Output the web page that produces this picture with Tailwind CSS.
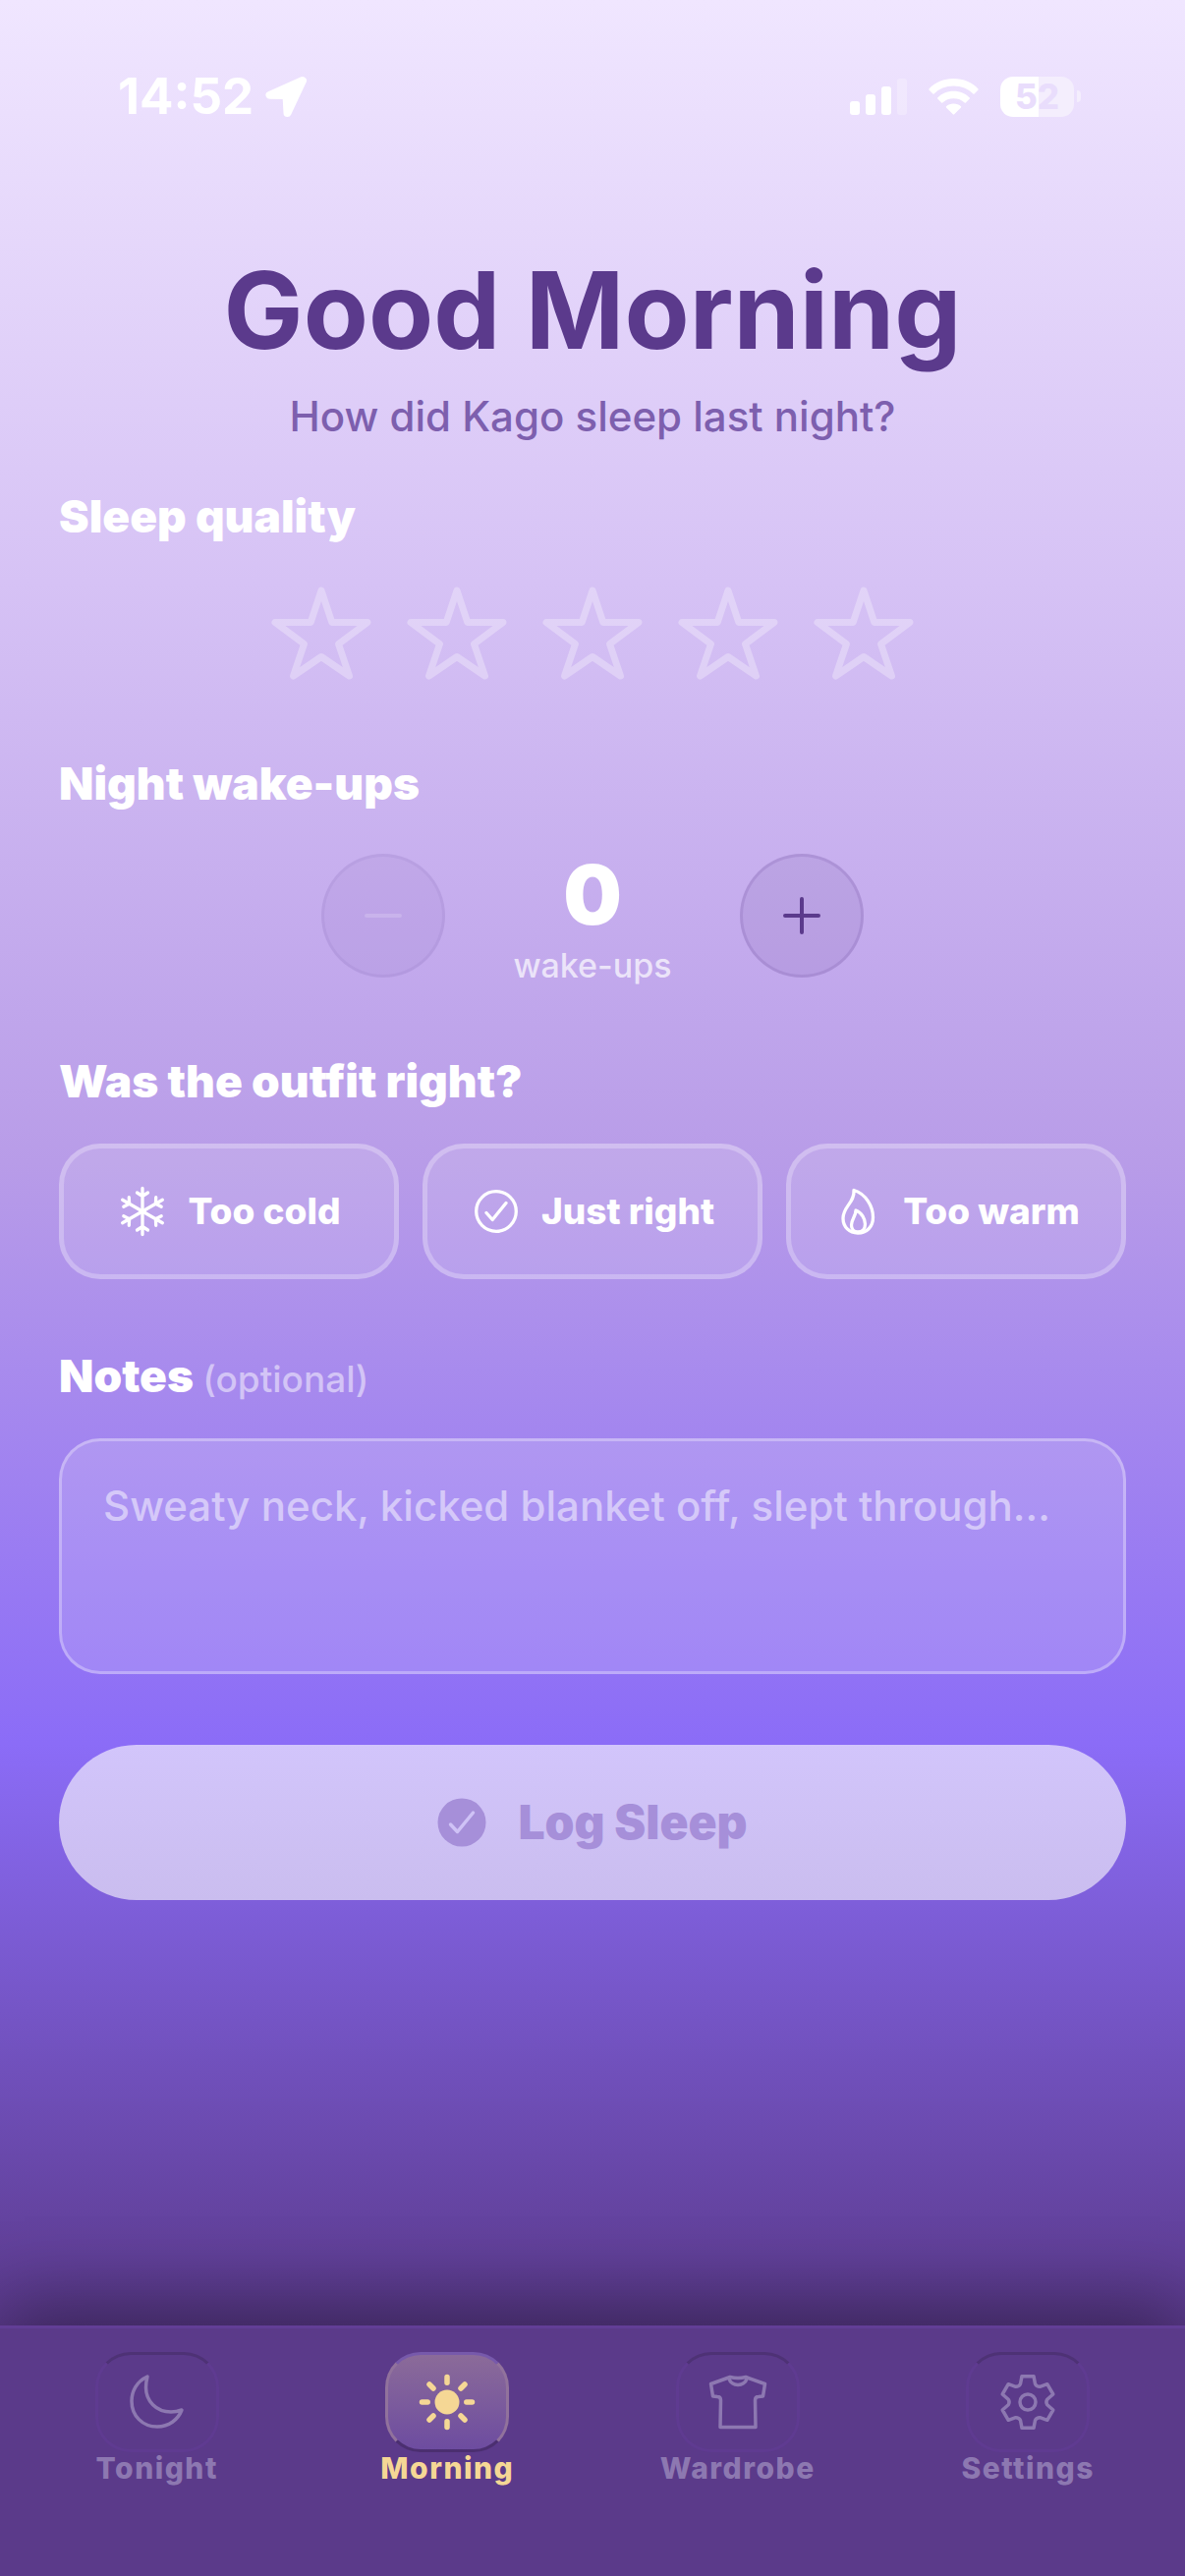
<!DOCTYPE html>
<html lang="en">
<head>
    <meta charset="UTF-8">
    <meta name="viewport" content="width=device-width, initial-scale=1.0">
    <title>Good Morning</title>
    <script src="https://cdn.jsdelivr.net/npm/@tailwindcss/browser@4"></script>
</head>
<body class="min-h-screen flex flex-col bg-[#5b3a8a] font-['Inter',sans-serif] text-white">

    <!-- Screen -->
    <div class="flex-1 bg-[linear-gradient(180deg,#f0e6ff_0%,#d6c2f5_25%,#b89ce8_50%,#8b6cf7_75%,#5b3a8c_100%)]">

        <!-- Status bar -->
        <header class="h-[196px] pl-[120px] pr-[106px] flex items-center justify-between">
            <div class="flex items-center gap-3">
                <span class="text-[51px] leading-[60px] font-bold">14:52</span>
                <svg class="size-11" viewBox="0 0 44 44" fill="#fff" stroke="#fff" stroke-width="8" stroke-linejoin="round"><path d="M38 6 L4.500 20.800 L21.500 21 L22.500 39 Z"/></svg>
            </div>
            <div class="flex items-center gap-[22px]">
                <svg class="w-[58px] h-[38px]" viewBox="0 0 58 38" fill="#fff">
                    <rect x="0" y="24" width="10" height="14" rx="3"/>
                    <rect x="16" y="17" width="10" height="21" rx="3"/>
                    <rect x="32" y="9" width="10" height="29" rx="3"/>
                    <rect x="48" y="1" width="10" height="37" rx="3" opacity=".25"/>
                </svg>
                <svg class="w-[51px] h-[38px]" viewBox="0 0 51 38" fill="#fff">
                    <path d="M25.500 1 C35.500 1 44.500 5 50.500 11.400 Q51 12 50.500 12.600 L46.600 16.500 Q46 17 45.400 16.500 C40.200 11.500 33.500 8.600 25.500 8.600 C17.500 8.600 10.800 11.500 5.600 16.500 Q5 17 4.400 16.500 L.5 12.600 Q0 12 .5 11.400 C6.500 5 15.500 1 25.500 1 Z"/>
                    <path d="M25.500 13.800 C32 13.800 37.600 16.300 41.800 20.400 Q42.300 21 41.800 21.500 L37.900 25.400 Q37.300 25.900 36.700 25.400 C33.700 22.700 30 21.200 25.500 21.200 C21 21.200 17.300 22.700 14.300 25.400 Q13.700 25.900 13.100 25.400 L9.200 21.500 Q8.700 21 9.200 20.400 C13.400 16.300 19 13.800 25.500 13.800 Z"/>
                    <path d="M25.500 26.600 C28.500 26.600 31 27.700 33 29.300 Q33.500 29.900 33 30.400 L26.200 37.300 Q25.500 38 24.800 37.300 L18 30.400 Q17.500 29.900 18 29.300 C20 27.700 22.500 26.600 25.500 26.600 Z"/>
                </svg>
                <div class="flex items-center gap-[3px]">
                    <div class="w-[75px] h-[41px] rounded-[13px] bg-[linear-gradient(90deg,#fff_52%,#f4eefd_52%)] flex items-center justify-center text-[35px] leading-[41px] font-extrabold text-[#e9ddfc]">52</div>
                    <div class="w-1 h-3 rounded-r-full bg-[#f4eefd]"></div>
                </div>
            </div>
        </header>

        <main class="px-[60px] pt-[60px]">
            <h1 class="text-center text-[108px] leading-[120px] font-bold text-[#5b3a8c]">Good Morning</h1>
            <p class="mt-[18px] text-center text-[42px] leading-[60px] font-medium text-[#7d5fae]">How did Kago sleep last night?</p>

            <!-- Sleep quality -->
            <h2 class="mt-[41px] text-[46px] leading-[60px] font-black">Sleep quality</h2>
            <svg class="hidden">
                <symbol id="star" viewBox="-57 -57 114 114">
                    <path d="M0 -43 L10.800 -10.500 H47 L17.500 11.500 L28.500 44 L0 24.500 L-28.500 44 L-17.500 11.500 L-47 -10.500 H-10.800 Z" fill="none" stroke="currentColor" stroke-width="7" stroke-linejoin="round"/>
                </symbol>
            </svg>
            <div class="mt-8 flex justify-center gap-6 text-white/30">
                <button type="button" aria-label="1 star"><svg class="size-[114px]"><use href="#star"/></svg></button>
                <button type="button" aria-label="2 stars"><svg class="size-[114px]"><use href="#star"/></svg></button>
                <button type="button" aria-label="3 stars"><svg class="size-[114px]"><use href="#star"/></svg></button>
                <button type="button" aria-label="4 stars"><svg class="size-[114px]"><use href="#star"/></svg></button>
                <button type="button" aria-label="5 stars"><svg class="size-[114px]"><use href="#star"/></svg></button>
            </div>

            <!-- Night wake-ups -->
            <h2 class="mt-[66px] text-[46px] leading-[60px] font-black">Night wake-ups</h2>
            <div class="mt-[42px] flex justify-center">
                <button type="button" disabled aria-label="Fewer wake-ups" class="size-[126px] rounded-full border-3 border-[#5b3a8c]/8 bg-[#5b3a8c]/6 flex items-center justify-center">
                    <svg class="size-12" viewBox="0 0 48 48"><path d="M7 24 H41" stroke="#fff" stroke-opacity=".17" stroke-width="4" stroke-linecap="round"/></svg>
                </button>
                <div class="w-[300px] text-center">
                    <div class="text-[84px] leading-[84px] font-black">0</div>
                    <div class="text-[34px] leading-[60px] font-medium text-white/70">wake-ups</div>
                </div>
                <button type="button" aria-label="More wake-ups" class="size-[126px] rounded-full border-3 border-[#5b3a8c]/16 bg-[#5b3a8c]/10 flex items-center justify-center">
                    <svg class="size-12" viewBox="0 0 48 48"><path d="M7 24 H41 M24 7 V41" stroke="#5b3a8c" stroke-width="4" stroke-linecap="round"/></svg>
                </button>
            </div>

            <!-- Outfit -->
            <h2 class="mt-[57px] text-[46px] leading-[60px] font-black">Was the outfit right?</h2>
            <div class="mt-[34px] grid grid-cols-3 gap-6 text-[37px] leading-[48px] font-extrabold">
                <button type="button" class="h-[138px] rounded-[42px] border-5 border-white/25 bg-white/12 flex items-center justify-center gap-5">
                    <svg class="size-[52px]" viewBox="-26 -26 52 52" fill="none" stroke="#fff" stroke-width="3.300" stroke-linecap="round" stroke-linejoin="round">
                        <defs><path id="flake" d="M0 0 V-23.500 M-5.500 -19 L0 -15.500 L5.500 -19"/></defs>
                        <use href="#flake"/>
                        <use href="#flake" transform="rotate(60)"/>
                        <use href="#flake" transform="rotate(120)"/>
                        <use href="#flake" transform="rotate(180)"/>
                        <use href="#flake" transform="rotate(240)"/>
                        <use href="#flake" transform="rotate(300)"/>
                    </svg>
                    Too cold
                </button>
                <button type="button" class="h-[138px] rounded-[42px] border-5 border-white/25 bg-white/12 flex items-center justify-center gap-5">
                    <svg class="size-[52px]" viewBox="-26 -26 52 52" fill="none" stroke="#fff" stroke-width="3.300" stroke-linecap="round" stroke-linejoin="round">
                        <circle r="20.300"/>
                        <path d="M-10 1.500 L-3.800 8.500 L10 -8.500"/>
                    </svg>
                    Just right
                </button>
                <button type="button" class="h-[138px] rounded-[42px] border-5 border-white/25 bg-white/12 flex items-center justify-center gap-5">
                    <svg class="size-[52px]" viewBox="-26 -26 52 52" fill="none" stroke="#fff" stroke-width="3.300" stroke-linecap="round" stroke-linejoin="round">
                        <path d="M-4 -21.500 C8 -18 15.500 -5 15.500 6 C15.500 16 9 22 0 22 C-8.500 22 -15 16 -15 7 C-15 -5 -3 -9 -4 -21.500 Z"/>
                        <path d="M-2 -1 C4 1 7.500 8 7.500 13 C7.500 18 4.500 21 0 21 C-4 21 -6.500 18 -6.500 14 C-6.500 8 -2 5 -2 -1 Z"/>
                    </svg>
                    Too warm
                </button>
            </div>

            <!-- Notes -->
            <label for="notes" class="mt-[68px] block text-[46px] leading-[60px] font-black">Notes <span class="text-[37px] font-medium text-white/50">(optional)</span></label>
            <textarea id="notes" placeholder="Sweaty neck, kicked blanket off, slept through…" class="mt-[30px] block w-full h-[240px] resize-none rounded-[42px] border-3 border-white/30 bg-white/15 px-[42px] py-[36px] text-[42px] leading-[60px] font-medium placeholder:text-white/50"></textarea>

            <button type="button" disabled class="mt-[72px] w-full h-[158px] rounded-full bg-[linear-gradient(180deg,#d2c5fb,#cabdef)] flex items-center justify-center gap-8 text-[48px] leading-[60px] font-black text-[#a68fd9]">
                <svg class="size-[50px]" viewBox="-25 -25 50 50"><circle r="24.500" fill="#a68fd9"/><path d="M-11.500 2 L-4.500 9.500 L11.500 -10" fill="none" stroke="#cfc2f6" stroke-width="3.500" stroke-linecap="round" stroke-linejoin="round"/></svg>
                Log Sleep
            </button>
        </main>
    </div>

    <!-- Tab bar -->
    <nav class="h-[255px] px-3 pt-6 border-t-3 border-[#623e96] bg-[#5b3a8a] shadow-[0_-24px_72px_rgba(0,0,0,0.35)] grid grid-cols-4 text-[30px] leading-[32px] font-extrabold tracking-wider text-[#8d78b1]">
        <a href="#tonight" class="flex flex-col items-center">
            <span class="w-[126px] h-[102px] rounded-[36px] border-3 border-[#5f3b91] border-t-[#4e3275] flex items-center justify-center">
                <svg class="size-[60px]" viewBox="0 0 60 60" fill="none" stroke="currentColor" stroke-width="3.500" stroke-linejoin="round"><path d="M20 4 C9 9 4 19 4 29 C4 44 15 55 30 55 C42 55 51 48 55 38 C51 39.500 48 40 44 40 C29 40 18.500 29 18.500 15 C18.500 11 19 8 20 4 Z"/></svg>
            </span>
            Tonight
        </a>
        <a href="#morning" class="flex flex-col items-center text-[#f5d795]">
            <span class="w-[126px] h-[102px] rounded-[36px] border-3 border-[#91729c] border-t-[#7759ab] border-b-[#4b2f70] bg-[linear-gradient(180deg,#8b6b99,#6d4ca0)] flex items-center justify-center">
                <svg class="size-[60px]" viewBox="-30 -30 60 60" fill="currentColor" stroke="currentColor" stroke-width="5.500" stroke-linecap="round">
                    <circle r="12.500" stroke="none"/>
                    <path d="M0 -19.800 V-25.500 M0 19.800 V25.500 M-19.800 0 H-25.500 M19.800 0 H25.500 M14 -14 L18 -18 M14 14 L18 18 M-14 14 L-18 18 M-14 -14 L-18 -18"/>
                </svg>
            </span>
            Morning
        </a>
        <a href="#wardrobe" class="flex flex-col items-center">
            <span class="w-[126px] h-[102px] rounded-[36px] border-3 border-[#5f3b91] border-t-[#4e3275] flex items-center justify-center">
                <svg class="size-[60px]" viewBox="0 0 60 60" fill="none" stroke="currentColor" stroke-width="3.500" stroke-linejoin="round">
                    <path d="M22 4.500 C27 5.800 33 5.800 38 4.500 L57.500 11.500 L55.500 24 L51 24.500 Q47.500 24.500 47.500 28 L48 55.500 H12 L12.500 28 Q12.500 24.500 9 24.500 L4.500 24 L2.500 11.500 Z"/>
                    <path d="M21 6 C23 14.500 37 14.500 39 6"/>
                </svg>
            </span>
            Wardrobe
        </a>
        <a href="#settings" class="flex flex-col items-center">
            <span class="w-[126px] h-[102px] rounded-[36px] border-3 border-[#5f3b91] border-t-[#4e3275] flex items-center justify-center">
                <svg class="size-[60px]" viewBox="-30 -30 60 60" fill="none" stroke="currentColor" stroke-width="3.500" stroke-linejoin="round">
                    <circle r="8"/>
                    <path d="M-6 -26.300 L6 -26.300 L7.500 -18.500 Q9 -15.600 12.300 -15.700 L19.800 -18.300 L25.800 -8 L19.800 -2.700 Q18 0 19.800 2.700 L25.800 8 L19.800 18.300 L12.300 15.700 Q9 15.600 7.500 18.500 L6 26.300 L-6 26.300 L-7.500 18.500 Q-9 15.600 -12.300 15.700 L-19.800 18.300 L-25.800 8 L-19.800 2.700 Q-18 0 -19.800 -2.700 L-25.800 -8 L-19.800 -18.300 L-12.300 -15.700 Q-9 -15.600 -7.500 -18.500 Z"/>
                </svg>
            </span>
            Settings
        </a>
    </nav>

</body>
</html>
